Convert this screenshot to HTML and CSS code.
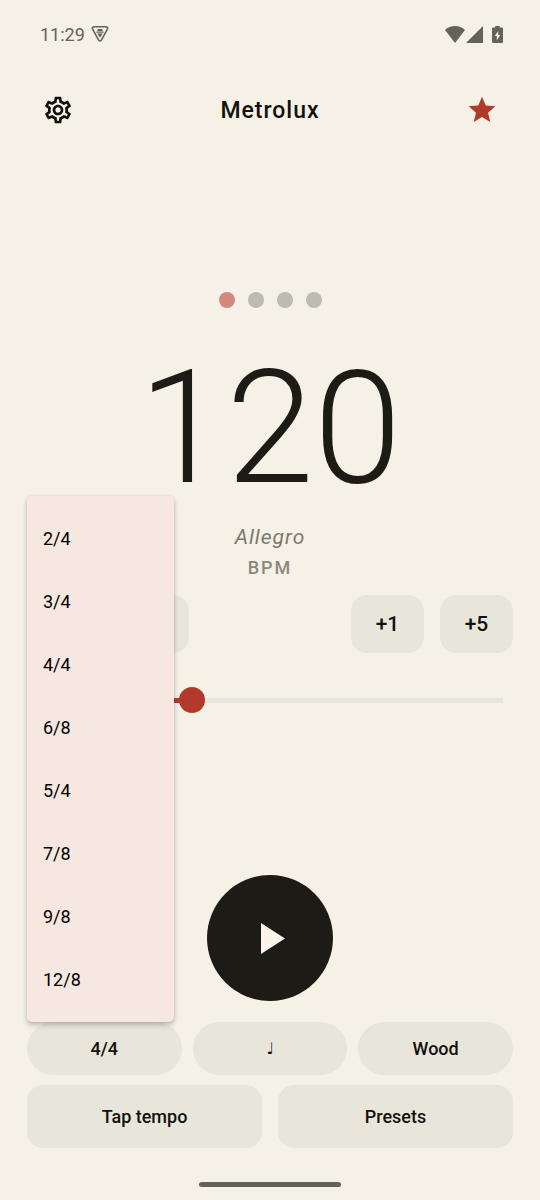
FILE: index.html
```
<!DOCTYPE html>
<html lang="en">
<head>
<meta charset="utf-8">
<meta name="viewport" content="width=device-width, initial-scale=1">
<title>Metrolux</title>
<link rel="stylesheet" href="styles.css">
</head>
<body>
<div class="screen">
  <div class="status">
    <span class="status-left">
      <span>11:29</span>
      <svg width="18" height="18" viewBox="0 0 18 18" aria-hidden="true">
        <path d="M3 1.8h12c1.5 0 2.1 1.3 1.4 2.4L10.5 14.9c-.8 1.3-2.2 1.3-3 0L1.600 4.200C.9 3.100 1.500 1.800 3 1.800z" fill="none" stroke="currentColor" stroke-width="1.6"/>
        <path d="M6.800 4.100h4.400l.5 2H6.300zM5.400 6.600h7.200v1.200H5.400zM6.300 8.600h5.400L9 12.800z" fill="currentColor"/>
      </svg>
    </span>
    <span class="status-right">
      <svg width="20" height="17" viewBox="0 0 20 17" aria-hidden="true"><path d="M0 4.100Q4.200 0 10 0t10 4.100L10 17z" fill="currentColor"/></svg>
      <svg class="signal" width="17" height="17" viewBox="0 0 17 17" aria-hidden="true"><path d="M17 0v17H0z" fill="currentColor"/></svg>
      <svg width="11" height="17" viewBox="0 0 11 17" aria-hidden="true"><path fill-rule="evenodd" d="M3.200 0h4.600v1.600h2.100q1.100 0 1.100 1.100v13.200q0 1.100-1.100 1.100H1.100Q0 17 0 15.900V2.700q0-1.100 1.100-1.100h2.100zM6.200 5L2.800 10h2v4.300L8.300 9h-2.100z" fill="currentColor"/></svg>
    </span>
  </div>

  <header class="topbar">
    <button class="icon-button" aria-label="Settings">
      <svg width="32" height="32" viewBox="0 0 24 24" aria-hidden="true"><path fill="currentColor" d="M19.430 12.980c.04-.32.07-.64.07-.98s-.03-.66-.07-.98l2.110-1.650c.19-.15.24-.42.12-.64l-2-3.460c-.09-.16-.26-.25-.44-.25-.06 0-.12.010-.17.030l-2.490 1c-.52-.4-1.080-.73-1.690-.98l-.38-2.650C14.460 2.180 14.250 2 14 2h-4c-.25 0-.46.18-.49.42l-.38 2.650c-.61.25-1.170.59-1.690.98l-2.490-1c-.06-.02-.12-.03-.18-.03-.17 0-.34.09-.43.25l-2 3.460c-.13.22-.07.49.12.64l2.110 1.650c-.04.32-.07.65-.07.98s.03.66.07.98l-2.110 1.650c-.19.15-.24.42-.12.64l2 3.460c.09.16.26.25.44.25.06 0 .12-.01.17-.03l2.490-1c.52.4 1.080.73 1.690.98l.38 2.650c.03.24.24.42.49.42h4c.25 0 .46-.18.49-.42l.38-2.650c.61-.25 1.170-.59 1.690-.98l2.490 1c.06.02.12.030.18.030.17 0 .34-.09.43-.25l2-3.460c.12-.22.07-.49-.12-.64zm-1.980-1.710c.04.31.05.52.05.73s-.02.43-.05.73l-.14 1.130.89.7 1.080.84-.7 1.210-1.270-.51-1.040-.42-.9.68c-.43.32-.84.56-1.250.73l-1.060.43-.16 1.130-.2 1.350h-1.400l-.19-1.350-.16-1.130-1.060-.43c-.43-.18-.83-.41-1.230-.71l-.91-.7-1.060.43-1.270.51-.7-1.210 1.080-.84.89-.7-.14-1.130c-.03-.31-.05-.54-.05-.74s.02-.43.05-.73l.14-1.130-.89-.7-1.080-.84.7-1.210 1.270.51 1.040.42.9-.68c.43-.32.84-.56 1.250-.73l1.060-.43.16-1.130.2-1.350h1.390l.19 1.350.16 1.130 1.060.43c.43.18.83.41 1.230.71l.91.7 1.060-.43 1.270-.51.7 1.210-1.070.85-.89.7zM12 8c-2.210 0-4 1.790-4 4s1.790 4 4 4 4-1.790 4-4-1.790-4-4-4m0 6c-1.100 0-2-.9-2-2s.9-2 2-2 2 .9 2 2-.9 2-2 2"/></svg>
    </button>
    <h1 class="title">Metrolux</h1>
    <button class="icon-button favorite" aria-label="Favorite">
      <svg width="32" height="32" viewBox="0 0 24 24" aria-hidden="true"><path fill="currentColor" d="M12 17.270L18.180 21l-1.640-7.030L22 9.240l-7.190-.61L12 2 9.190 8.630 2 9.240l5.460 4.730L5.820 21z"/></svg>
    </button>
  </header>

  <main class="main">
    <div class="beats">
      <span class="beat beat-on"></span><span class="beat"></span><span class="beat"></span><span class="beat"></span>
    </div>
    <div class="tempo">120</div>
    <div class="marking">Allegro</div>
    <div class="unit">BPM</div>
    <div class="steps">
      <div class="step-pair">
        <button class="step">−5</button>
        <button class="step">−1</button>
      </div>
      <div class="step-pair">
        <button class="step">+1</button>
        <button class="step">+5</button>
      </div>
    </div>
    <input class="slider" type="range" min="30" max="300" value="120" aria-label="Tempo">
    <button class="play" aria-label="Play">
      <svg width="24" height="31" viewBox="0 0 24 31" aria-hidden="true"><path d="M0 0l24 15.500L0 31z" fill="currentColor"/></svg>
    </button>
  </main>

  <footer class="controls">
    <div class="chips">
      <div class="anchor">
        <button class="chip" aria-haspopup="menu" aria-expanded="true">4/4</button>
        <div class="menu" role="menu">
          <button class="menu-item" role="menuitem">2/4</button>
          <button class="menu-item" role="menuitem">3/4</button>
          <button class="menu-item" role="menuitem">4/4</button>
          <button class="menu-item" role="menuitem">6/8</button>
          <button class="menu-item" role="menuitem">5/4</button>
          <button class="menu-item" role="menuitem">7/8</button>
          <button class="menu-item" role="menuitem">9/8</button>
          <button class="menu-item" role="menuitem">12/8</button>
        </div>
      </div>
      <button class="chip note">♩</button>
      <button class="chip">Wood</button>
    </div>
    <div class="actions">
      <button class="action">Tap tempo</button>
      <button class="action">Presets</button>
    </div>
  </footer>
  <div class="home-bar"></div>
</div>
</body>
</html>
```
FILE: styles.css
```
:root {
  --bg: #f5f1e6;
  --surface: #e8e6db;
  --ink: #1d1b16;
  --text: #12110c;
  --muted: #64625a;
  --accent: #b13a2b;
}

* {
  box-sizing: border-box;
}

body {
  margin: 0;
  background: var(--bg);
  color: var(--text);
  font-family: Roboto, "Liberation Sans", sans-serif;
}

button {
  border: 0;
  padding: 0;
  background: none;
  color: inherit;
  font: inherit;
  font-weight: 500;
  cursor: pointer;
}

svg {
  display: block;
}

.screen {
  display: flex;
  flex-direction: column;
  min-height: 100vh;
}

.status {
  display: flex;
  align-items: center;
  justify-content: space-between;
  height: 68px;
  padding: 0 37px 0 40px;
  color: var(--muted);
  font-size: 18px;
}

.status-left,
.status-right {
  display: flex;
  align-items: center;
}

.status-left {
  gap: 6px;
}

.status-right {
  gap: 1px;
}

.signal {
  margin-right: 8px;
}

.topbar {
  display: flex;
  align-items: center;
  justify-content: space-between;
  height: 84px;
  padding: 0 26px;
}

.icon-button {
  display: grid;
  place-items: center;
  width: 64px;
  height: 64px;
}

.favorite {
  color: var(--accent);
}

.title {
  margin: 0;
  font-size: 23px;
  font-weight: 500;
  letter-spacing: 1px;
}

.main {
  display: flex;
  flex: 1;
  flex-direction: column;
  align-items: center;
  padding: 140px 24px 21px;
}

.beats {
  display: flex;
  gap: 13px;
}

.beat {
  width: 16px;
  height: 16px;
  border-radius: 50%;
  background: #bebcb0;
}

.beat-on {
  background: #d1897d;
}

.tempo {
  margin-top: 34px;
  color: var(--ink);
  font-size: 158px;
  font-weight: 300;
  line-height: 172px;
}

.marking {
  margin-top: 7px;
  color: #7b796f;
  font-size: 21px;
  font-style: italic;
  line-height: 32px;
  letter-spacing: 1px;
}

.unit {
  color: #8a887e;
  font-size: 18px;
  font-weight: 500;
  line-height: 30px;
  letter-spacing: 2px;
}

.steps {
  display: flex;
  align-self: stretch;
  justify-content: space-between;
  margin-top: 12px;
  padding: 0 3px;
}

.step-pair {
  display: flex;
  gap: 16px;
}

.step {
  width: 73px;
  height: 58px;
  border-radius: 16px;
  background: var(--surface);
  font-size: 21px;
}

.slider {
  --fill: 33%;
  appearance: none;
  align-self: stretch;
  height: 28px;
  margin: 33px 0 0;
  background:
    linear-gradient(to right, var(--accent) var(--fill), var(--surface) var(--fill))
    center / calc(100% - 26px) 5px no-repeat;
}

.slider::-webkit-slider-thumb {
  appearance: none;
  width: 26px;
  height: 26px;
  border-radius: 50%;
  background: var(--accent);
}

.play {
  display: grid;
  place-items: center;
  width: 126px;
  height: 126px;
  margin-top: auto;
  padding-left: 6px;
  border-radius: 50%;
  background: var(--ink);
  color: #fbf3ea;
}

.controls {
  display: flex;
  flex-direction: column;
  gap: 10px;
  padding: 0 27px;
}

.chips {
  display: grid;
  grid-template-columns: repeat(3, 1fr);
  gap: 11px;
}

.anchor {
  position: relative;
}

.chip {
  width: 100%;
  height: 53px;
  border-radius: 27px;
  background: var(--surface);
  font-size: 18px;
}

.note {
  font-family: "DejaVu Sans", sans-serif;
  font-size: 16px;
  font-weight: 400;
}

.menu {
  position: absolute;
  bottom: 100%;
  left: 0;
  width: 147px;
  padding: 11px 0;
  border-radius: 5px;
  background: #f6e7e0;
  box-shadow: 0 3px 5px rgba(40, 30, 20, 0.25), 0 0 3px rgba(40, 30, 20, 0.1);
}

.menu-item {
  display: block;
  width: 100%;
  height: 63px;
  padding: 0 16px;
  color: #000;
  font-size: 18px;
  font-weight: 400;
  text-align: left;
}

.actions {
  display: grid;
  grid-template-columns: repeat(2, 1fr);
  gap: 16px;
}

.action {
  height: 63px;
  border-radius: 16px;
  background: var(--surface);
  font-size: 18px;
}

.home-bar {
  width: 142px;
  height: 5px;
  margin: 34px auto 13px;
  border-radius: 3px;
  background: var(--muted);
}
```
